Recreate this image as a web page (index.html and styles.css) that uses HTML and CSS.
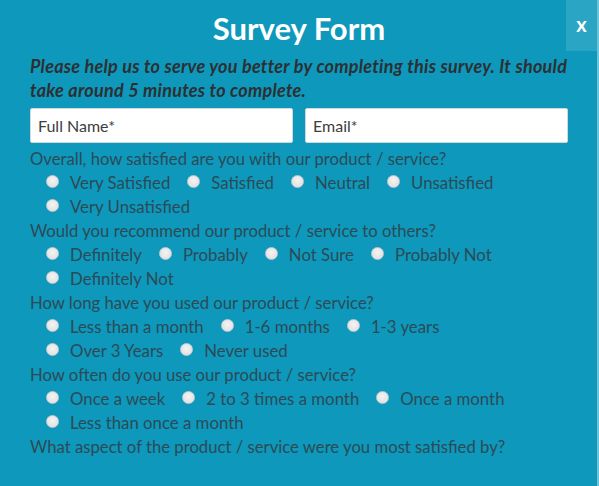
FILE: index.html
```html
<!DOCTYPE html>
<html lang="en">
<head>
    <meta charset="UTF-8">
    <meta name="viewport" content="width=device-width, initial-scale=1.0">
    <title>Survey Form</title>
    <link rel="stylesheet" href="styles.css">
</head>
<body>

    <div class="survey-box">
        <button class="close-btn" type="button">x</button>
        <h2>Survey Form</h2>
        <p class="intro">Please help us to serve you better by completing this survey. It should take around 5 minutes to complete.</p>

        <form id="survey-form">
            <div class="name-row">
                <input type="text" name="fullname" placeholder="Full Name*">
                <input type="email" name="email" placeholder="Email*">
            </div>

            <div class="question">Overall, how satisfied are you with our product / service?</div>
            <div class="options">
                <label><input type="radio" name="q1"> Very Satisfied</label>
                <label><input type="radio" name="q1"> Satisfied</label>
                <label><input type="radio" name="q1"> Neutral</label>
                <label><input type="radio" name="q1"> Unsatisfied</label>
                <label><input type="radio" name="q1"> Very Unsatisfied</label>
            </div>

            <div class="question">Would you recommend our product / service to others?</div>
            <div class="options">
                <label><input type="radio" name="q2"> Definitely</label>
                <label><input type="radio" name="q2"> Probably</label>
                <label><input type="radio" name="q2"> Not Sure</label>
                <label><input type="radio" name="q2"> Probably Not</label>
                <label><input type="radio" name="q2"> Definitely Not</label>
            </div>

            <div class="question">How long have you used our product / service?</div>
            <div class="options">
                <label><input type="radio" name="q3"> Less than a month</label>
                <label><input type="radio" name="q3"> 1-6 months</label>
                <label><input type="radio" name="q3"> 1-3 years</label>
                <label><input type="radio" name="q3"> Over 3 Years</label>
                <label><input type="radio" name="q3"> Never used</label>
            </div>

            <div class="question">How often do you use our product / service?</div>
            <div class="options">
                <label><input type="radio" name="q4"> Once a week</label>
                <label><input type="radio" name="q4"> 2 to 3 times a month</label>
                <label><input type="radio" name="q4"> Once a month</label>
                <label><input type="radio" name="q4"> Less than once a month</label>
            </div>

            <div class="question">What aspect of the product / service were you most satisfied by?</div>
        </form>
    </div>

</body>
</html>
```

FILE: styles.css
```css
html, body {
    margin: 0;
    height: 100%;
}

body {
    background-color: #0e98bb;
    font-family: Lato, "Open Sans", sans-serif;
    border-right: 2px solid #6cc3d9;
    box-sizing: border-box;
}

.survey-box {
    position: relative;
    padding: 0 29px 0 30px;
}

.close-btn {
    position: absolute;
    top: 0;
    right: 0;
    width: 31px;
    height: 51px;
    border: none;
    background-color: #2aa5c4;
    color: white;
    font-family: Lato, sans-serif;
    font-size: 20px;
    font-weight: bold;
    padding: 0 0 4px 0;
    cursor: pointer;
}

h2 {
    margin: 0;
    padding-top: 10px;
    text-align: center;
    color: white;
    font-size: 31px;
    line-height: 36px;
    font-weight: bold;
}

.intro {
    margin: 8px 0 6px 0;
    color: #2c3034;
    font-size: 18px;
    line-height: 24px;
    letter-spacing: 0.25px;
    font-weight: bold;
    font-style: italic;
}

.name-row {
    display: flex;
    gap: 12px;
    margin-bottom: 4px;
}

.name-row input {
    flex: 1;
    height: 35px;
    box-sizing: border-box;
    padding: 0 7px;
    border: 1px solid #cfd8dc;
    border-radius: 2px;
    font-family: Lato, sans-serif;
    font-size: 16px;
    color: #333;
}

.name-row input::placeholder {
    color: #3d3d3d;
}

.question {
    color: #2b4b57;
    font-size: 16.7px;
    line-height: 24px;
}

.options {
    display: flex;
    flex-wrap: wrap;
    padding-left: 16px;
}

.options label {
    display: flex;
    align-items: center;
    color: #2b4b57;
    font-size: 16.8px;
    line-height: 24px;
    margin-right: 17px;
}

.options input[type="radio"] {
    appearance: none;
    -webkit-appearance: none;
    width: 13px;
    height: 13px;
    margin: 0 11px 0 0;
    position: relative;
    top: -2px;
    border-radius: 50%;
    border: 1px solid #c4cdd1;
    background: radial-gradient(circle at 50% 40%, #f4f4f4 0%, #dcdcdc 100%);
}
```
